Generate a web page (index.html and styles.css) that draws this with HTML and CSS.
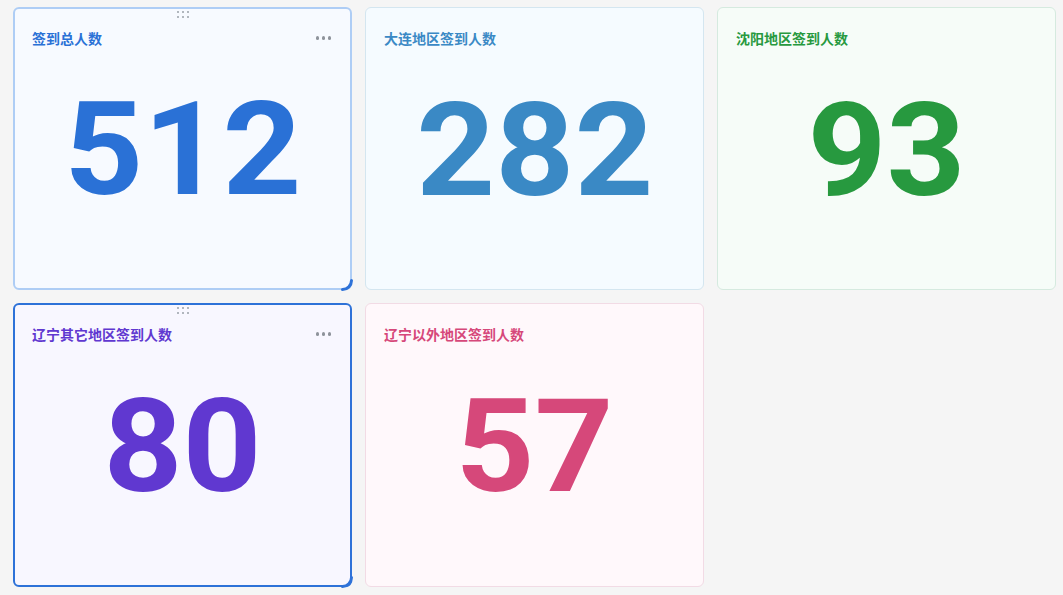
FILE: index.html
```html
<!DOCTYPE html>
<html lang="zh">
<head>
<meta charset="utf-8">
<title>签到统计</title>
<link rel="stylesheet" href="styles.css">
</head>
<body>
<div class="grid">
  <div class="card c-blue hovered">
    <div class="drag"><span></span><span></span><span></span><span></span><span></span><span></span></div>
    <div class="head"><span class="title">签到总人数</span><span class="more"><i></i><i></i><i></i></span></div>
    <div class="num"><span>512</span></div>
    <svg class="resize" width="12" height="12" viewBox="0 0 12 12"><path d="M1.5 10.5 A9 9 0 0 0 10.5 1.5" fill="none" stroke="#2e72d8" stroke-width="3" stroke-linecap="round"/></svg>
  </div>
  <div class="card c-steel">
    <div class="head"><span class="title">大连地区签到人数</span></div>
    <div class="num"><span>282</span></div>
  </div>
  <div class="card c-green">
    <div class="head"><span class="title">沈阳地区签到人数</span></div>
    <div class="num"><span>93</span></div>
  </div>
  <div class="card c-purple active">
    <div class="drag"><span></span><span></span><span></span><span></span><span></span><span></span></div>
    <div class="head"><span class="title">辽宁其它地区签到人数</span><span class="more"><i></i><i></i><i></i></span></div>
    <div class="num"><span>80</span></div>
    <svg class="resize" width="12" height="12" viewBox="0 0 12 12"><path d="M1.5 10.5 A9 9 0 0 0 10.5 1.5" fill="none" stroke="#2e72d8" stroke-width="3" stroke-linecap="round"/></svg>
  </div>
  <div class="card c-pink">
    <div class="head"><span class="title">辽宁以外地区签到人数</span></div>
    <div class="num"><span>57</span></div>
  </div>
</div>
</body>
</html>
```
FILE: styles.css
```css
* { box-sizing: border-box; }
html, body { margin: 0; padding: 0; }
body {
  background: #f5f5f5;
  width: 1063px;
  height: 595px;
  overflow: hidden;
  font-family: "Noto Sans", "Noto Sans CJK SC", sans-serif;
}
.grid {
  display: grid;
  grid-template-columns: repeat(3, 339px);
  grid-template-rows: 283px 284px;
  column-gap: 13px;
  row-gap: 13px;
  padding: 7px 0 0 13px;
}
.card {
  position: relative;
  border: 1px solid #dde6ee;
  border-radius: 6px;
  display: flex;
  flex-direction: column;
}
.head {
  display: flex;
  align-items: center;
  justify-content: space-between;
  height: 20px;
  margin: 20px 20px 0 18px;
}
.hovered .head, .active .head { margin: 19px 19px 0 17px; }
.title {
  font-family: "Noto Sans CJK SC", sans-serif;
  font-weight: 700;
  font-size: 14px;
  line-height: 20px;
}
.more { display: flex; gap: 2.5px; }
.more i {
  width: 3.5px; height: 3.5px; border-radius: 50%;
  background: #8e939b; display: block;
}
.num {
  flex: 1;
  display: flex;
  align-items: center;
  justify-content: center;
  margin-bottom: 36px;
  font-family: Roboto, "Liberation Sans", sans-serif;
  font-weight: 700;
  font-size: 130px;
  line-height: 1;
}
.num span {
  display: inline-block;
  transform: scaleX(1.06);
  letter-spacing: 0;
}
.drag {
  position: absolute;
  top: 2px; left: 50%;
  transform: translateX(-50%);
  display: grid;
  grid-template-columns: repeat(3, 2px);
  gap: 3px 3px;
}
.drag span { width: 2px; height: 2px; background: #9aa0a8; border-radius: 50%; display: block; }
.resize { position: absolute; right: -3px; bottom: -3px; }

.c-blue { background: #f7faff; }
.c-blue .title, .c-blue .num { color: #2a71d6; }
.hovered { border: 2px solid #aecdf5; }

.c-steel { background: #f5fbff; border-color: #d4e6f0; }
.c-steel .title, .c-steel .num { color: #3a89c5; }

.c-green { background: #f6fcf8; border-color: #d5eadf; }
.c-green .title, .c-green .num { color: #27993f; }

.c-purple { background: #f8f7ff; }
.c-purple .title, .c-purple .num { color: #6038d0; }
.active { border: 2px solid #2e72d8; }

.c-pink { background: #fff8fb; border-color: #f2dbe5; }
.c-pink .title, .c-pink .num { color: #d6487a; }
```
